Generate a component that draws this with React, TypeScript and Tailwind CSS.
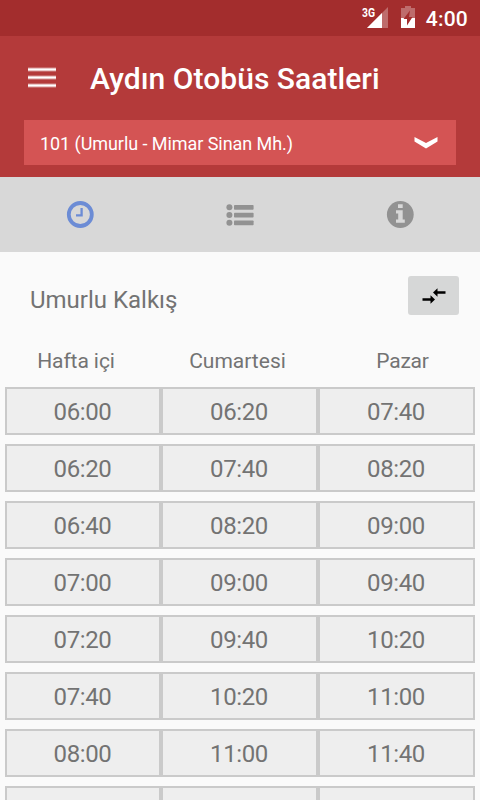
import type { ReactNode } from "react";

const SAATLER = [
    ["06:00", "06:20", "07:40"],
    ["06:20", "07:40", "08:20"],
    ["06:40", "08:20", "09:00"],
    ["07:00", "09:00", "09:40"],
    ["07:20", "09:40", "10:20"],
    ["07:40", "10:20", "11:00"],
    ["08:00", "11:00", "11:40"],
    ["", "", ""],
];

function StatusBar() {
    return (
        <div className="flex h-9 shrink-0 items-center justify-end bg-[#a32d2d] pr-3 text-white">
            <svg className="mb-px" width="28" height="24" viewBox="0 0 28 24">
                <path d="M27 1v21H6z" fill="#fff" fillOpacity="0.3" />
                <path d="M21 7v15H6z" fill="#fff" />
                <text x="1" y="11" fill="#fff" fontFamily="Roboto, sans-serif" fontWeight="700" fontSize="12" textLength="13" lengthAdjust="spacingAndGlyphs">3G</text>
            </svg>
            <svg className="mb-0.5 ml-3" width="14" height="22" viewBox="0 0 14 22">
                <path d="M4 0h6v2h4v10H0V2h4z" fill="#fff" fillOpacity="0.3" />
                <path d="M0 12h14v10H0z" fill="#fff" />
                <path d="M9 4.500 2.500 13H6v6.500L11.500 11H8z" fill="#a32d2d" />
            </svg>
            <span className="ml-[11px] pt-0.5 text-[21px] leading-none font-medium tracking-[0.2px]">4:00</span>
        </div>
    );
}

function Header() {
    return (
        <header className="h-[141px] shrink-0 bg-[#b43a3a] px-6 text-white">
            <div className="flex h-[84px] items-center pl-1">
                <svg width="28" height="22" viewBox="0 0 28 22">
                    <path d="M0 2.500h28M0 10.500h28M0 18.500h28" stroke="#fff" strokeOpacity="0.45" strokeWidth="4" />
                    <path d="M0 2.500h28M0 10.500h28M0 18.500h28" stroke="#fff" strokeWidth="2" />
                </svg>
                <h1 className="ml-[34px] pt-0.5 text-[30px] leading-none font-medium tracking-[0.04px] whitespace-nowrap">Aydın Otobüs Saatleri</h1>
            </div>
            <button className="flex h-[45px] w-full items-center justify-between bg-[#d45454] pr-[18px] pl-4">
                <span className="pt-0.5 text-[18px] leading-none tracking-[-0.06px]">101 (Umurlu - Mimar Sinan Mh.)</span>
                <svg width="24" height="12" viewBox="0 0 24 12">
                    <path d="M.5 0 12 6 23.500 0v4.500L12 11.500.5 4.500z" fill="#fff" />
                </svg>
            </button>
        </header>
    );
}

function Tab({ children }: { children: ReactNode }) {
    return <button className="flex flex-1 items-center justify-center pb-0.5">{children}</button>;
}

function Tabs() {
    return (
        <nav className="flex h-[75px] shrink-0 bg-[#d8d8d8]">
            <Tab>
                <svg width="28" height="28" viewBox="0 0 28 28" fill="none" stroke="#6c8cd5">
                    <circle cx="14.300" cy="14.500" r="11.500" strokeWidth="3.800" />
                    <path d="M15.600 8v7.300H10" strokeWidth="2.300" />
                </svg>
            </Tab>
            <Tab>
                <svg width="28" height="28" viewBox="0 0 28 28" fill="#929292">
                    {[7.3, 15.1, 22.8].map((y) => (
                        <g key={y}>
                            <circle cx="3.400" cy={y} r="3" />
                            <rect x="8" y={y - 2.4} width="19.600" height="4.800" rx="0.800" />
                        </g>
                    ))}
                </svg>
            </Tab>
            <Tab>
                <svg width="28" height="28" viewBox="0 0 28 28">
                    <circle cx="14.300" cy="14.500" r="13.400" fill="#929292" />
                    <path d="M12 4.200h4.700v3.900H12zM10 10.200h6.700v9.400h2.100v3.200H10v-3.200h2.200v-6.200H10z" fill="#d8d8d8" />
                </svg>
            </Tab>
        </nav>
    );
}

export default function App() {
    return (
        <div className="flex h-[800px] w-[480px] flex-col overflow-hidden bg-[#fafafa] font-['Roboto',sans-serif] text-[#737373]">
            <StatusBar />
            <Header />
            <Tabs />
            <div className="flex shrink-0 items-start justify-between pt-6 pr-[21px] pl-[30px]">
                <h2 className="pt-3 text-[24px] leading-none">Umurlu Kalkış</h2>
                <button className="flex h-[39px] w-[51px] items-center justify-center rounded-[3px] bg-[#d6d7d7]">
                    <svg width="24" height="18" viewBox="0 0 24 18">
                        <path d="M.5 11.300H8.500V8.200l4.500 4.300-4.500 4.300v-3.100H.5zM23.500 4.300H15.500V1.200l-4.500 4.300 4.500 4.300v-3.100h8z" fill="#000" />
                    </svg>
                </button>
            </div>
            <div className="mt-[34px] flex h-[38px] shrink-0 text-[21px] leading-6">
                <span className="w-[152px] text-center tracking-[-0.08px]">Hafta içi</span>
                <span className="w-[171px] text-center">Cumartesi</span>
                <span className="w-[157px] pl-0.5 text-center tracking-[-0.2px]">Pazar</span>
            </div>
            <div className="flex flex-col gap-[9px] px-[5px]">
                {SAATLER.map((satir, i) => (
                    <div key={i} className="grid h-12 shrink-0 grid-cols-[156px_157px_157px]">
                        {satir.map((saat, j) => (
                            <div key={j} className="flex items-center justify-center border-2 border-[#cacaca] bg-[#eeeeee] pt-0.5 pr-px text-[24px] leading-none tracking-[-0.4px]">
                                {saat}
                            </div>
                        ))}
                    </div>
                ))}
            </div>
        </div>
    );
}
